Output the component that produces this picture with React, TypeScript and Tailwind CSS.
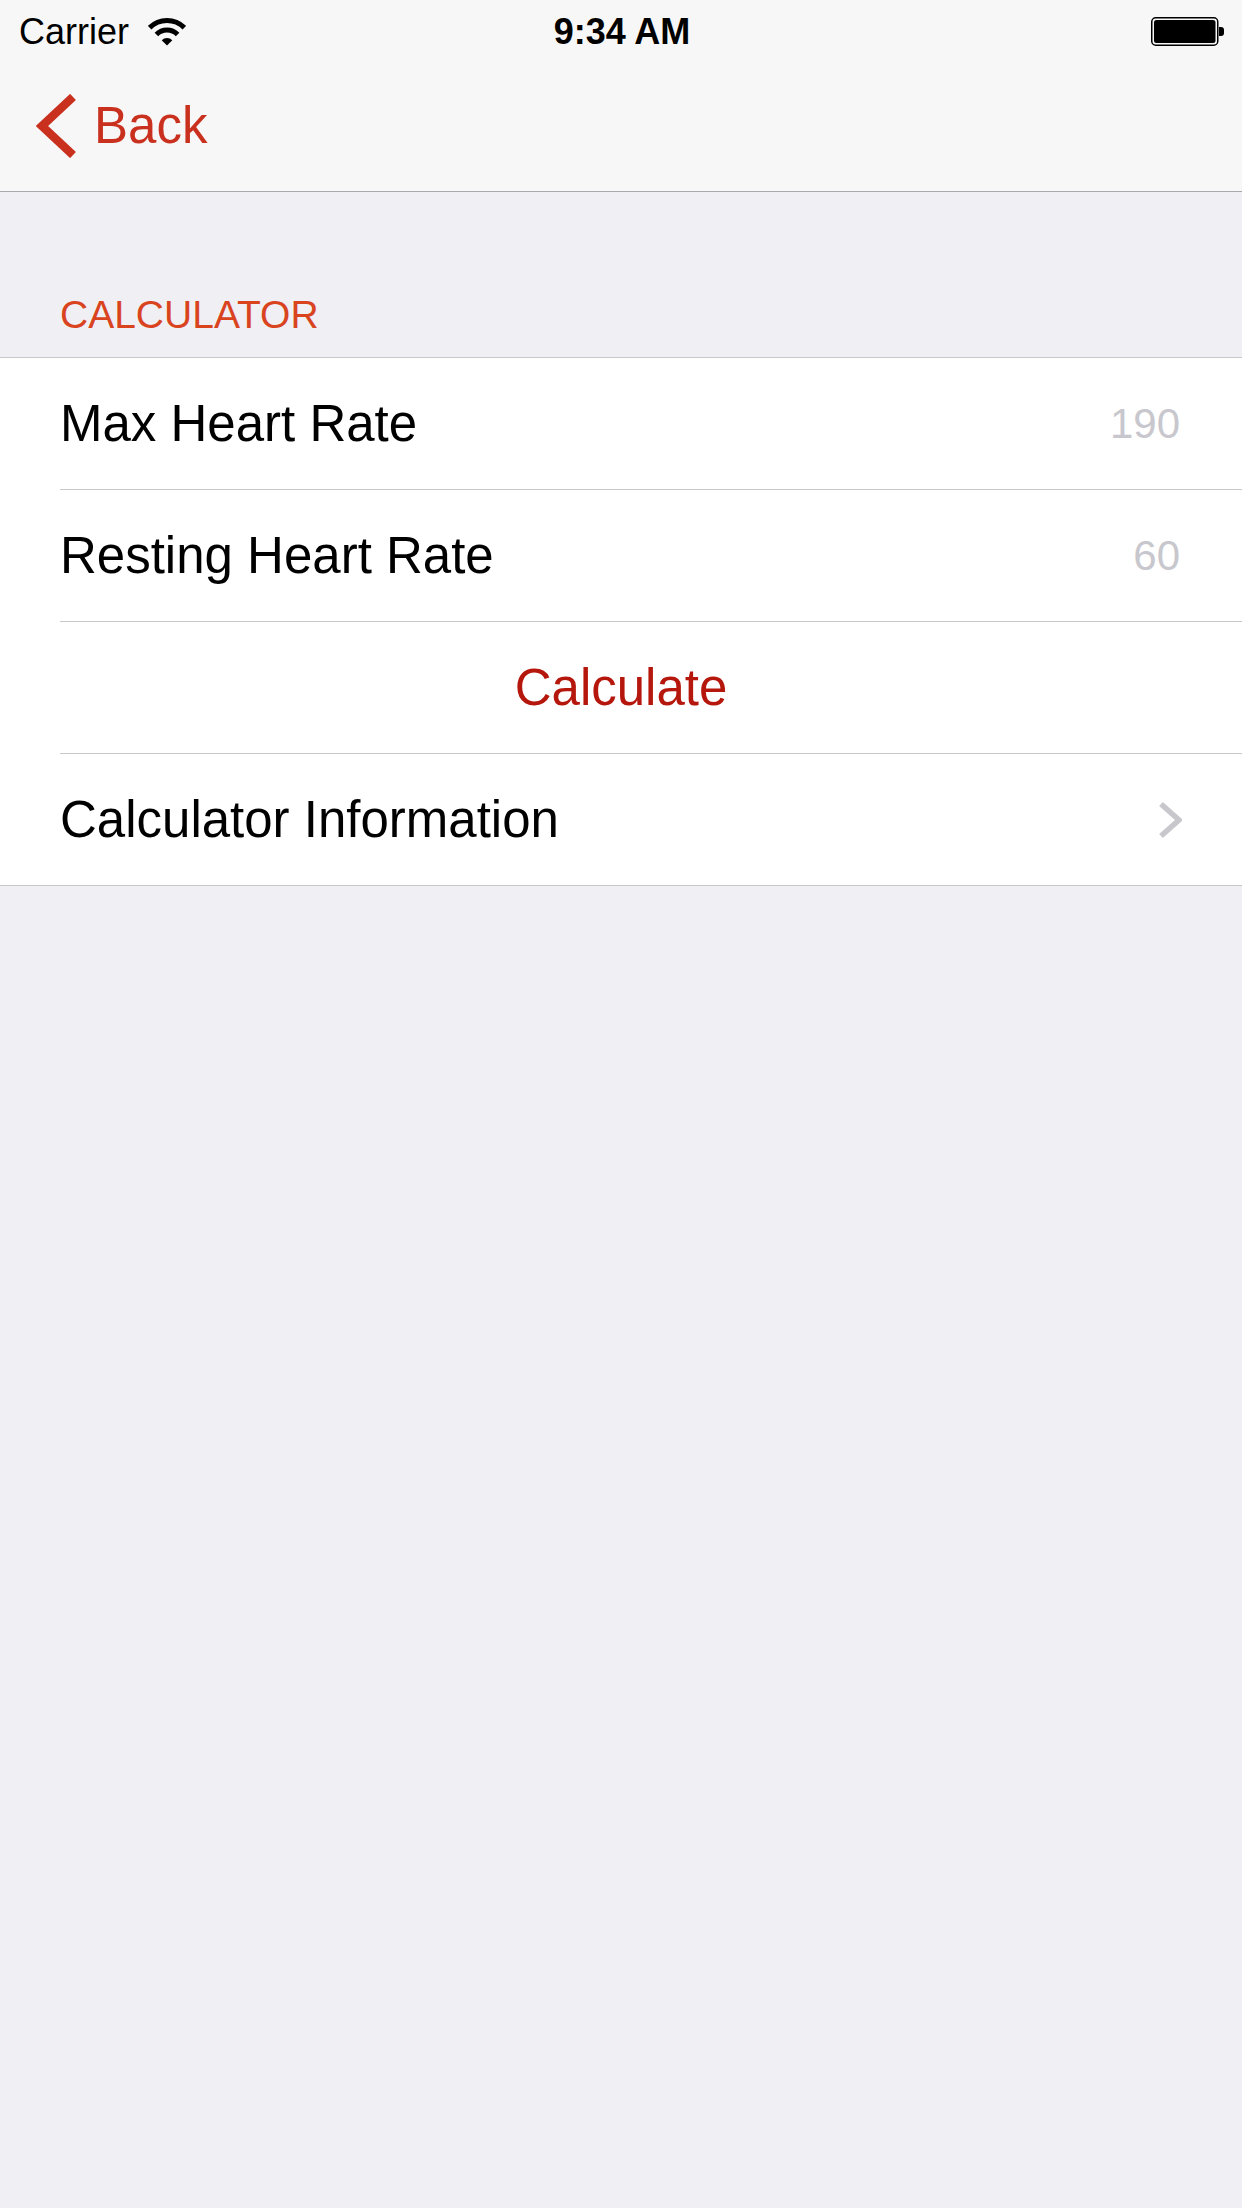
import { type ReactNode } from 'react'

function Wifi() {
  return (
    <svg width="38" height="28" viewBox="0 0 38 28" className="block">
      <path d="M 1.7 9.7 A 24.5 24.5 0 0 1 36.3 9.7" fill="none" stroke="#000" strokeWidth="5" />
      <path d="M 8.4 16.4 A 15 15 0 0 1 29.6 16.4" fill="none" stroke="#000" strokeWidth="5" />
      <path d="M 19 27.5 L 13.7 22.3 A 7.5 7.5 0 0 1 24.3 22.3 Z" fill="#000" />
    </svg>
  )
}

function Battery() {
  return (
    <svg width="74" height="30" viewBox="0 0 74 30" className="block">
      <rect x="0.75" y="0.75" width="66" height="27.5" rx="4" fill="none" stroke="#000" strokeWidth="1.5" />
      <rect x="3" y="3" width="61.5" height="23" rx="2.5" fill="#000" />
      <path d="M 68 10 h 2 a 3 3 0 0 1 3 3 v 3 a 3 3 0 0 1 -3 3 h -2 Z" fill="#000" />
    </svg>
  )
}

function Row({ children, last = false }: { children: ReactNode; last?: boolean }) {
  return (
    <div className={last ? 'h-[132px] pl-[60px] flex border-b border-[#c8c7cc]' : 'h-[132px] pl-[60px] flex'}>
      <div className={last ? 'flex-1 flex items-center' : 'flex-1 flex items-center border-b border-[#c8c7cc]'}>
        {children}
      </div>
    </div>
  )
}

export default function App() {
  return (
    <div className="min-h-screen w-full bg-[#efeff4] font-['Liberation_Sans',Arial,sans-serif] text-black">
      {/* status + nav */}
      <div className="bg-[#f7f7f7] border-b border-[#a9a9ad]">
        <div className="h-[60px] pt-[4px] pl-[19px] pr-[17px] flex items-center text-[36px] leading-none">
          <div className="flex-1 flex items-center gap-[19px]">
            <span>Carrier</span>
            <Wifi />
          </div>
          <span className="font-bold">9:34 AM</span>
          <div className="flex-1 flex justify-end">
            <Battery />
          </div>
        </div>
        <div className="h-[131px] flex items-center pl-[36px] gap-[18px] text-[#c9301e]">
          <svg width="40" height="64" viewBox="0 0 40 64" className="block">
            <polyline points="37,3 6,32 37,61" fill="none" stroke="#c9301e" strokeWidth="8.5" strokeLinejoin="miter" />
          </svg>
          <span className="text-[51px] leading-none">Back</span>
        </div>
      </div>

      {/* section header */}
      <div className="pt-[103px] pb-[23px] pl-[60px] text-[39px] leading-[39px] text-[#d9441f]">
        CALCULATOR
      </div>

      {/* table */}
      <div className="bg-white border-t border-[#c8c7cc] text-[51px] leading-none">
        <Row>
          <span className="flex-1">Max Heart Rate</span>
          <span className="pr-[62px] text-[42px] text-[#c7c7cd]">190</span>
        </Row>
        <Row>
          <span className="flex-1">Resting Heart Rate</span>
          <span className="pr-[62px] text-[42px] text-[#c7c7cd]">60</span>
        </Row>
        <Row>
          <span className="flex-1 text-center pr-[60px] text-[#b5170c]">Calculate</span>
        </Row>
        <Row last>
          <span className="flex-1">Calculator Information</span>
          <svg width="24" height="38" viewBox="0 0 24 38" className="block mr-[60px]">
            <polyline points="3,3 21,19 3,35" fill="none" stroke="#c7c7cc" strokeWidth="5.5" />
          </svg>
        </Row>
      </div>
    </div>
  )
}
